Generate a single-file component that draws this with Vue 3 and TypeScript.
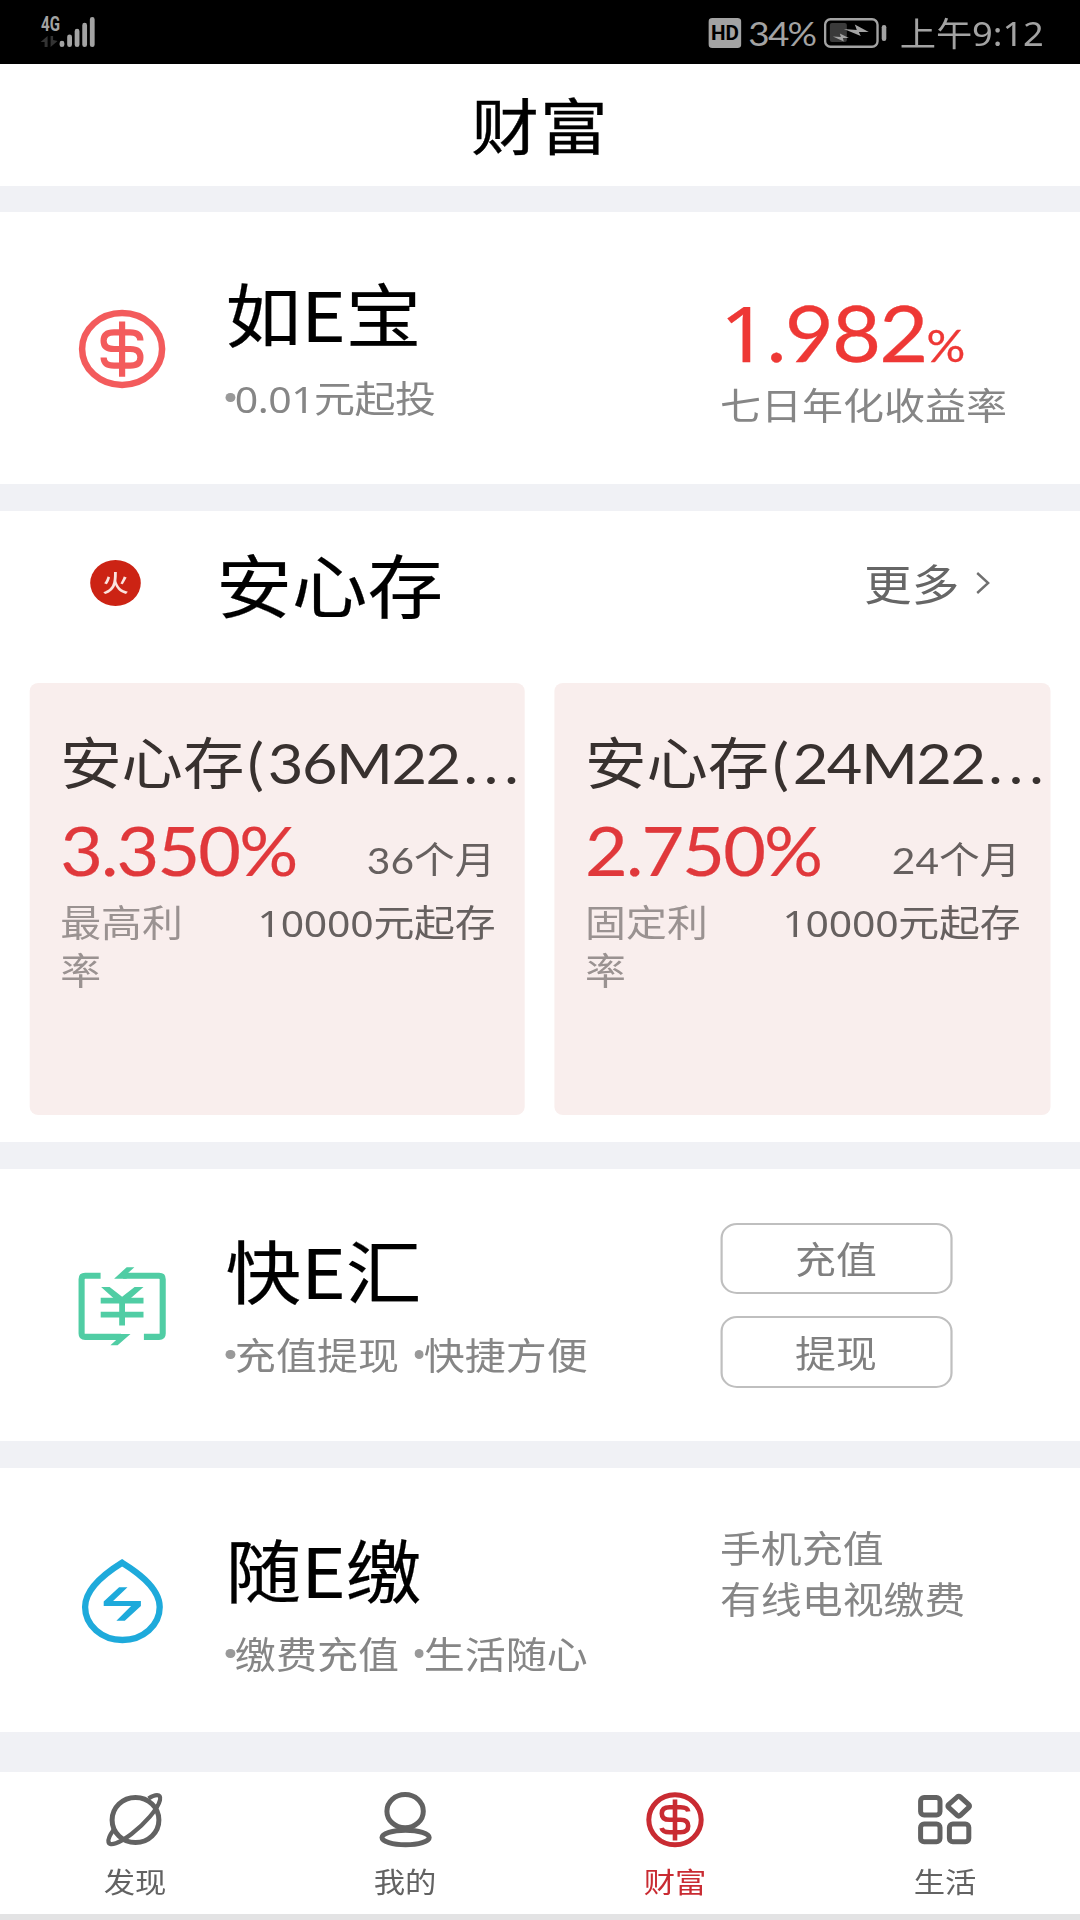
<script setup lang="ts">
interface Deposit {
  name: string
  code: string
  rate: string
  term: string
  rateLabel: string
  minimum: string
}

interface Tab {
  key: 'discover' | 'mine' | 'wealth' | 'life'
  label: string
}

const deposits: Deposit[] = [
  { name: '安心存', code: '36M22', rate: '3.350%', term: '36个月', rateLabel: '最高利率', minimum: '10000元起存' },
  { name: '安心存', code: '24M22', rate: '2.750%', term: '24个月', rateLabel: '固定利率', minimum: '10000元起存' },
]

const tabs: Tab[] = [
  { key: 'discover', label: '发现' },
  { key: 'mine', label: '我的' },
  { key: 'wealth', label: '财富' },
  { key: 'life', label: '生活' },
]

const activeTab: Tab['key'] = 'wealth'
const transferActions: string[] = ['充值', '提现']
const transferTags: string[] = ['充值提现', '快捷方便']
const paymentTags: string[] = ['缴费充值', '生活随心']
const paymentLinks: string[] = ['手机充值', '有线电视缴费']
</script>

<template>
  <div class="viewport">
    <div class="screen">
      <div class="status">
        <svg class="signal" viewBox="40 14 60 36" preserveAspectRatio="none">
          <text class="net" x="41.5" y="31" textLength="19" lengthAdjust="spacingAndGlyphs">4G</text>
          <path d="M41 42 L48 36 V47 H45 V42 Z M51 36 H53.5 V40 L58 41 L51 47 Z" fill="#333" />
          <g stroke="#a3a3a3" stroke-width="4.8" stroke-linecap="round">
            <path d="M62.4 43.2 V44.7 M70 36.8 V44.7 M77.5 31.2 V44.7 M85.1 25.2 V44.7 M92.7 19.4 V44.7" />
          </g>
        </svg>
        <div class="status-right">
          <svg class="hd" viewBox="0 0 33 30" preserveAspectRatio="none">
            <rect width="33" height="30" rx="4" fill="#a3a3a3" />
            <text x="2.6" y="22.3" textLength="28" lengthAdjust="spacingAndGlyphs">HD</text>
          </svg>
          <span class="percent">34%</span>
          <svg class="battery" viewBox="0 0 64 30" preserveAspectRatio="none">
            <rect x="1.2" y="1.2" width="52.6" height="27.6" rx="5.5" fill="none" stroke="#a3a3a3" stroke-width="2.4" />
            <rect x="6" y="5" width="17" height="19" rx="2" fill="#3a3a3a" />
            <path d="M20 11 L33 12 L31 6.5 L45 14 L35 14 L37 18 Z" fill="#a3a3a3" />
            <path d="M9 18.5 L17 19 L16 15.5 L25 20 L19 20 L20 23.5 Z" fill="#a3a3a3" />
            <rect x="58" y="7" width="4.6" height="16" rx="2.2" fill="#a3a3a3" />
          </svg>
          <span class="time">上午9:12</span>
        </div>
      </div>

      <header class="titlebar">财富</header>

      <section class="product">
        <div class="product-icon">
          <svg viewBox="0 0 110 100" preserveAspectRatio="none" fill="none" stroke="#f35b5c">
            <ellipse cx="55" cy="51" rx="40" ry="36" stroke-width="6.5" />
            <path d="M73.3 42.5 Q73 34.3 63 34.3 H47 Q36.5 34.3 36.5 42.7 Q36.5 51 47 51 H63 Q73.3 51 73.3 59.3 Q73.3 67.7 63 67.7 H47 Q36.7 67.7 36.5 59.5 M55 23.5 V78.8" stroke-width="6.2" />
          </svg>
        </div>
        <div class="product-main">
          <h2>如E宝</h2>
          <div class="tags"><span class="tag amount">0.01元起投</span></div>
        </div>
        <div class="yield">
          <div class="yield-value"><span class="one">1</span>.982<span class="pct">%</span></div>
          <div class="yield-label">七日年化收益率</div>
        </div>
      </section>

      <section class="deposits">
        <div class="deposit-head">
          <span class="fire">火</span>
          <h2>安心存</h2>
          <span class="more">更多</span>
          <svg class="chevron" viewBox="0 0 14 22" preserveAspectRatio="none">
            <path d="M1.5 1 L12.5 11 L1.5 21" fill="none" stroke="#707070" stroke-width="2.4" />
          </svg>
        </div>
        <div class="cards">
          <article v-for="item in deposits" :key="item.code" class="card">
            <h3>{{ item.name }}<span class="paren">(</span><span class="code">{{ item.code }}</span><span class="dots">...</span></h3>
            <div class="card-rate">
              <span class="rate">{{ item.rate }}</span>
              <span class="term">{{ item.term }}</span>
            </div>
            <div class="card-foot">
              <span class="rate-label">{{ item.rateLabel }}</span>
              <span class="minimum">{{ item.minimum }}</span>
            </div>
          </article>
        </div>
      </section>

      <section class="product">
        <div class="product-icon">
          <svg viewBox="0 0 110 100" preserveAspectRatio="none" fill="none" stroke="#50cda4" stroke-width="6.1">
            <path d="M33.5 20.8 H18 Q14.5 20.8 14.5 24.2 V78.5 Q14.5 81.9 18 81.9 H54" />
            <path d="M56 20.8 H92 Q95.6 20.8 95.6 24.2 V78.5 Q95.6 81.9 92 81.9 H76.8" />
            <path d="M47 23.8 L59.6 12.2 H67.3 L59.6 19.2 V23.8 Z M63.4 78.9 L50.5 90.2 H43.3 L51 83.2 V78.9 Z" fill="#50cda4" stroke="none" />
            <path d="M33.6 45.7 H76.4 M33.6 59.7 H76.4 M55 44.2 V70.4" stroke-width="5.8" />
            <path d="M34 32 H42.5 L55 41.7 L67.5 32 H76.4 L59 47.2 H51 Z" fill="#50cda4" stroke="none" />
          </svg>
        </div>
        <div class="product-main">
          <h2>快E汇</h2>
          <div class="tags"><span v-for="tag in transferTags" :key="tag" class="tag">{{ tag }}</span></div>
        </div>
        <div class="actions">
          <button v-for="action in transferActions" :key="action" type="button">{{ action }}</button>
        </div>
      </section>

      <section class="product payment">
        <div class="product-icon">
          <svg viewBox="0 0 110 100" preserveAspectRatio="none">
            <path d="M55 12.8 C45 19 18 36 18 57 A37.3 33 0 0 0 92.6 57 C92.6 36 65 19 55 12.8 Z" fill="none" stroke="#1eaadb" stroke-width="6.3" />
            <path d="M52 37.3 H60.4 L46 51 H73.8 V56 L57.7 70.7 H49.3 L64 56 H36.6 V51.5 Z" fill="#1eaadb" />
          </svg>
        </div>
        <div class="product-main">
          <h2>随E缴</h2>
          <div class="tags"><span v-for="tag in paymentTags" :key="tag" class="tag">{{ tag }}</span></div>
        </div>
        <div class="links">
          <span v-for="link in paymentLinks" :key="link">{{ link }}</span>
        </div>
      </section>

      <nav class="tabs">
        <div v-for="tab in tabs" :key="tab.key" class="tab" :class="{ active: tab.key === activeTab }">
          <svg viewBox="0 0 60 60" preserveAspectRatio="none" fill="none" stroke="currentColor" stroke-width="5">
            <template v-if="tab.key === 'discover'">
              <ellipse cx="31" cy="30" rx="23.4" ry="22.6" />
              <path d="M44 8.5 C50 4.5 57 3 55.5 10 C53.5 19 40 34 27 44 C15 53 5 57 4 52 C3.5 49 6 44 9 40" stroke-width="4.2" />
            </template>
            <template v-else-if="tab.key === 'mine'">
              <ellipse cx="30" cy="21.2" rx="18.2" ry="16.6" />
              <ellipse cx="30.5" cy="47.5" rx="23.6" ry="7.2" />
            </template>
            <template v-else-if="tab.key === 'wealth'">
              <ellipse cx="30.4" cy="29.8" rx="26.2" ry="25" />
              <path d="M43.6 21.5 Q43 17.3 36 17.3 H25 Q17.2 17.3 17.2 23.4 Q17.2 29.8 25 29.8 H36 Q43.6 29.8 43.6 36 Q43.6 42.3 36 42.3 H25 Q18 42.3 17 38 M30.4 9.5 V50.5" stroke-width="4.6" />
            </template>
            <template v-else>
              <rect x="5.4" y="7.5" width="19.4" height="17.6" rx="3.5" />
              <rect x="5.4" y="34" width="19.4" height="17.8" rx="3.5" />
              <rect x="34.2" y="34" width="19.4" height="17.8" rx="3.5" />
              <path d="M42 7 Q43.6 5.6 45.2 7 L53.6 14.6 Q55 16 53.6 17.4 L45.2 25.4 Q43.6 26.8 42 25.4 L33.4 17.4 Q32 16 33.4 14.6 Z" />
            </template>
          </svg>
          <span>{{ tab.label }}</span>
        </div>
      </nav>
      <div class="bottom-edge"></div>
    </div>
  </div>
</template>

<style>
body {
  margin: 0;
  background: #fff;
}
</style>

<style scoped>
.viewport {
  width: 1080px;
  height: 1920px;
  overflow: hidden;
}

.screen {
  width: 981.82px;
  height: 1920px;
  display: flex;
  flex-direction: column;
  background: #f0f1f5;
  transform: scaleX(1.1);
  transform-origin: 0 0;
  font-family: 'Noto Sans CJK SC', sans-serif;
  color: #000;
}

.screen > * {
  flex: none;
  box-sizing: border-box;
}

h2,
h3 {
  margin: 0;
  font-weight: 400;
}

h2 {
  font-size: 68.8px;
  line-height: 82px;
  -webkit-text-stroke: 0.2px currentColor;
}

.status {
  height: 64.5px;
  margin-bottom: -0.5px;
  display: flex;
  justify-content: space-between;
  align-items: flex-start;
  background: #000;
  color: #a3a3a3;
  padding: 0 33px 0 36.4px;
}

.signal {
  width: 54.5px;
  height: 36px;
  margin-top: 14px;
}

.net {
  font: 700 19.5px 'Roboto', sans-serif;
  fill: #a3a3a3;
}

.status-right {
  display: flex;
  align-items: center;
  height: 66px;
}

.hd {
  width: 30px;
  height: 30px;
}

.hd text {
  font: 700 21px 'Roboto', sans-serif;
  fill: #000;
}

.percent {
  margin-left: 5.8px;
  width: 68.7px;
  font-family: 'Lato', sans-serif;
  font-size: 33.5px;
  letter-spacing: -1.6px;
  line-height: 66px;
}

.battery {
  width: 58px;
  height: 30px;
}

.time {
  margin-left: 11px;
  font-family: 'Noto Sans', 'Noto Sans CJK SC', sans-serif;
  font-size: 33px;
  line-height: 66px;
  letter-spacing: -0.1px;
  padding-top: 2px;
}

.titlebar {
  height: 122px;
  line-height: 120px;
  background: #fff;
  text-align: center;
  font-size: 61.5px;
  letter-spacing: 1px;
  margin-bottom: 26px;
  -webkit-text-stroke: 0.4px currentColor;
}

.product {
  height: 272px;
  display: grid;
  grid-template-columns: 205px 449.5px 1fr;
  background: #fff;
  margin-bottom: 27px;
}

.product.payment {
  height: 264px;
  margin-bottom: 40px;
}

.product-icon {
  display: flex;
  align-items: center;
  padding-left: 60.7px;
}

.product-icon svg {
  width: 100px;
  height: 100px;
}

.product-main {
  padding-top: 59px;
}

.tags {
  display: flex;
  gap: 14px;
  margin-top: 20.5px;
}

.tag {
  display: flex;
  align-items: center;
  font: 37.3px/50px 'Noto Sans', 'Noto Sans CJK SC', sans-serif;
  color: #868686;
}

.tag::before {
  content: '';
  width: 8.5px;
  height: 9px;
  border-radius: 50%;
  background: #999;
  margin: 0 0 3px 0;
}

.amount {
  letter-spacing: -0.5px;
}

.yield {
  padding-top: 80px;
}

.yield-value {
  height: 80px;
  font: 77px/80px 'Lato', sans-serif;
  letter-spacing: -1.7px;
  color: #ee3835;
  -webkit-text-stroke: 0.3px currentColor;
  white-space: nowrap;
}

.one {
  font-family: 'Noto Sans', sans-serif;
  line-height: 1;
}

.pct {
  font-size: 44px;
  line-height: 1;
}

.yield-label {
  margin-top: 8.5px;
  font: 37.3px/50px 'Noto Sans', 'Noto Sans CJK SC', sans-serif;
  color: #868686;
}

.deposits {
  height: 631px;
  background: #fff;
  margin-bottom: 27px;
}

.deposit-head {
  height: 143px;
  display: flex;
  align-items: center;
  padding: 0 82px 0 82px;
}

.fire {
  width: 46px;
  height: 46px;
  border-radius: 50%;
  background: #cc2314;
  color: #fbe3df;
  font-size: 24px;
  font-weight: 500;
  line-height: 43px;
  text-align: center;
}

.deposit-head h2 {
  margin-left: 68.5px;
  flex: 1;
}

.more {
  font-size: 43.3px;
  line-height: 58px;
  margin-top: -2px;
  color: #666;
}

.chevron {
  width: 12.7px;
  height: 22px;
  margin-left: 15px;
}

.cards {
  display: flex;
  gap: 27px;
  padding: 0 27.2px;
  margin-top: 29px;
}

.card {
  flex: 1;
  min-width: 0;
  box-sizing: border-box;
  height: 431.5px;
  padding: 50px 27px 0 27.5px;
  background: #f9eeed;
  border-radius: 8px;
}

.card h3 {
  height: 60px;
  font: 55.8px/60px 'Lato', 'Noto Sans CJK SC', sans-serif;
  white-space: nowrap;
  color: #38312f;
}

.paren {
  margin-left: 3px;
  letter-spacing: 3.5px;
}

.code {
  letter-spacing: -1.4px;
}

.dots {
  margin-left: 3.5px;
  letter-spacing: 5.4px;
}

.card-rate {
  display: flex;
  justify-content: space-between;
  align-items: baseline;
  height: 70px;
  margin-top: 21.5px;
}

.rate {
  font: 67px/70px 'Lato', sans-serif;
  letter-spacing: -1.7px;
  color: #e0383b;
  -webkit-text-stroke: 0.2px currentColor;
}

.term {
  font: 37px/50px 'Lato', 'Noto Sans CJK SC', sans-serif;
  position: relative;
  top: -1.5px;
  color: #66605f;
}

.card-foot {
  display: flex;
  justify-content: space-between;
  margin-top: 14px;
  font: 37.2px/48.5px 'Noto Sans', 'Noto Sans CJK SC', sans-serif;
}

.rate-label {
  width: 120px;
  color: #9a9291;
}

.minimum {
  color: #66605f;
  letter-spacing: -0.2px;
}

.actions {
  padding-top: 53.5px;
  display: flex;
  flex-direction: column;
  gap: 22px;
}

.actions button {
  box-sizing: border-box;
  width: 211px;
  height: 71.5px;
  padding: 3px 0 0;
  border: 2.4px solid #bfbfbf;
  border-radius: 15px;
  background: #fff;
  font: 37.2px/63px 'Noto Sans', 'Noto Sans CJK SC', sans-serif;
  color: #808080;
}

.links {
  padding-top: 55px;
  display: flex;
  flex-direction: column;
  font: 37.2px/51px 'Noto Sans', 'Noto Sans CJK SC', sans-serif;
  color: #868686;
}

.tabs {
  height: 142px;
  display: flex;
  background: #fff;
}

.tab {
  flex: 1;
  display: flex;
  flex-direction: column;
  align-items: center;
  padding-top: 18px;
  color: #626262;
  font-size: 28.5px;
  line-height: 36px;
}

.tab svg {
  width: 54.55px;
  height: 60px;
  margin-bottom: 13px;
}

.tab.active {
  color: #c92b32;
}

.bottom-edge {
  height: 6px;
  background: #e3e3e4;
}
</style>
